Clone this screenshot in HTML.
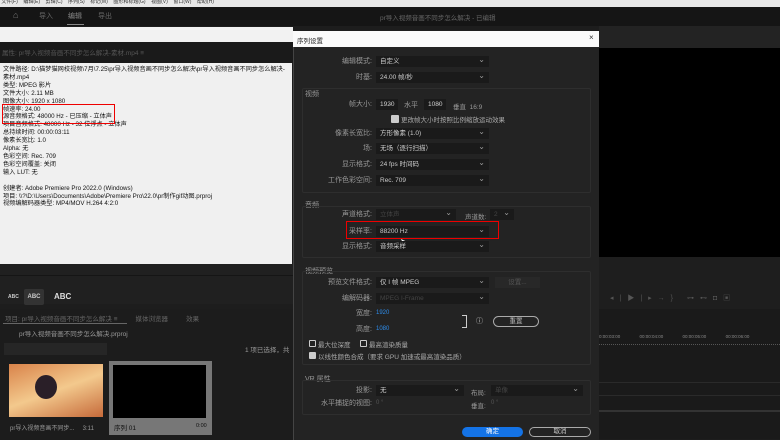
<!DOCTYPE html>
<html><head><meta charset="utf-8"><style>
*{margin:0;padding:0;box-sizing:border-box}
body{width:780px;height:440px;overflow:hidden;background:#1d1d1d;font-family:"Liberation Sans","Noto Sans CJK SC",sans-serif;position:relative;font-size:7px;color:#aaa}
.a{position:absolute;white-space:nowrap}
.dd{position:absolute;background:#1a1a1a;height:11px;color:#ccc;font-size:6.5px;line-height:11px;padding-left:4px}
.dd:after{content:"⌄";position:absolute;right:4px;top:-2px;color:#999;font-size:8px}
.lbl{position:absolute;color:#999;font-size:7px;text-align:right;width:90px;line-height:11px}
.box{position:absolute;border:1px solid #2e2e2e;border-radius:2px}
.sec{position:absolute;color:#999;font-size:7px}
.wt{color:#111;font-size:6.2px;line-height:7.9px}
</style></head><body>
<div class="a" style="left:0;top:0;width:780px;height:7px;background:#e8e8e8;color:#333;font-size:5px;line-height:5px">&nbsp;文件(F) &nbsp;&nbsp; 编辑(E) &nbsp;&nbsp; 剪辑(C) &nbsp;&nbsp; 序列(S) &nbsp;&nbsp; 标记(M) &nbsp;&nbsp; 图形和标题(G) &nbsp;&nbsp; 视图(V) &nbsp;&nbsp; 窗口(W) &nbsp;&nbsp; 帮助(H)</div>
<div class="a" style="left:0;top:7px;width:780px;height:19px;background:#151515"></div>
<div class="a" style="left:13px;top:11px;width:9px;height:9px;color:#777;font-size:9px;line-height:9px">⌂</div>
<div class="a" style="left:39px;top:11px;color:#666;font-size:7px">导入</div>
<div class="a" style="left:68px;top:11px;color:#888;font-size:7px">编辑</div>
<div class="a" style="left:67px;top:24px;width:17px;height:1px;background:#888"></div>
<div class="a" style="left:98px;top:11px;color:#666;font-size:7px">导出</div>
<div class="a" style="left:380px;top:12px;color:#666;font-size:6.5px">pr导入视频音画不同步怎么解决 - 已编辑</div>
<div class="a" style="left:0;top:27px;width:293px;height:15px;background:#f2f2f2"></div>
<div class="a" style="left:0;top:42px;width:293px;height:21px;background:#1a1a1a"></div>
<div class="a" style="left:2px;top:47px;color:#555;font-size:6.5px">属性: pr导入视频音画不同步怎么解决-素材.mp4 ≡</div>
<div class="a" style="left:0;top:63px;width:292px;height:201px;background:#f0f0f0"></div>
<div class="a wt" style="left:3px;top:66px">文件路径: D:\猫梦猫网校视频\7月\7.25\pr导入视频音画不同步怎么解决\pr导入视频音画不同步怎么解决-<br>素材.mp4<br>类型: MPEG 影片<br>文件大小: 2.11 MB<br>图像大小: 1920 x 1080<br>帧速率: 24.00<br>源音频格式: 48000 Hz - 已压缩 - 立体声<br>项目音频格式: 48000 Hz - 32 位浮点 - 立体声<br>总持续时间: 00:00:03:11<br>像素长宽比: 1.0<br>Alpha: 无<br>色彩空间: Rec. 709<br>色彩空间覆盖: 关闭<br>输入 LUT: 无<br><br>创建者: Adobe Premiere Pro 2022.0 (Windows)<br>项目: \\?\D:\Users\Documents\Adobe\Premiere Pro\22.0\pr制作gif动图.prproj<br>视频编解码器类型: MP4/MOV H.264 4:2:0</div>
<div class="a" style="left:2px;top:104px;width:113px;height:20px;border:1px solid #e00"></div>
<div class="a" style="left:0;top:264px;width:293px;height:40px;background:#202020"></div>
<div class="a" style="left:0;top:275px;width:293px;height:1px;background:#151515"></div>
<div class="a" style="left:8px;top:294px;color:#ccc;font-size:5px;font-weight:bold">ABC</div>
<div class="a" style="left:24px;top:289px;width:20px;height:16px;background:#333;border-radius:2px;color:#ccc;font-size:6px;text-align:center;line-height:16px;font-weight:bold">ABC</div>
<div class="a" style="left:54px;top:292px;color:#ddd;font-size:8px;font-weight:bold">ABC</div>
<div class="a" style="left:0;top:309px;width:293px;height:131px;background:#1c1c1c"></div>
<div class="a" style="left:5px;top:313px;color:#666;font-size:6.5px">项目: pr导入视频音画不同步怎么解决 ≡ &nbsp;&nbsp;&nbsp;&nbsp;&nbsp;&nbsp;&nbsp;&nbsp; 媒体浏览器 &nbsp;&nbsp;&nbsp;&nbsp;&nbsp;&nbsp;&nbsp;&nbsp; 效果</div>
<div class="a" style="left:3px;top:323px;width:124px;height:1px;background:#666"></div>
<div class="a" style="left:19px;top:328px;color:#999;font-size:6.5px">pr导入视频音画不同步怎么解决.prproj</div>
<div class="a" style="left:4px;top:343px;width:103px;height:12px;background:#262626"></div>
<div class="a" style="left:245px;top:344px;color:#999;font-size:6.5px">1 项已选择，共</div>
<div class="a" style="left:9px;top:364px;width:94px;height:53px;background:linear-gradient(160deg,#d9834a,#f3c98d 50%,#c66a3a)"></div>
<div class="a" style="left:35px;top:375px;width:22px;height:24px;border-radius:50%;background:#2a1f28"></div>
<div class="a" style="left:10px;top:423px;color:#999;font-size:6px">pr导入视频音画不同步...&nbsp;&nbsp;&nbsp;&nbsp; 3:11</div>
<div class="a" style="left:109px;top:361px;width:103px;height:74px;background:#777"></div>
<div class="a" style="left:113px;top:365px;width:93px;height:53px;background:#000"></div>
<div class="a" style="left:114px;top:422px;color:#111;font-size:6.5px">序列 01</div>
<div class="a" style="left:196px;top:423px;color:#111;font-size:5.5px">0:00</div>
<div class="a" style="left:599px;top:26px;width:181px;height:22px;background:#232323"></div>
<div class="a" style="left:599px;top:48px;width:181px;height:209px;background:#000"></div>
<div class="a" style="left:599px;top:257px;width:181px;height:52px;background:#1e1e1e"></div>
<div class="a" style="left:610px;top:293px;color:#555;font-size:7px;letter-spacing:6px">◂|▶|▸→} ⊶⊷◘▣</div>
<div class="a" style="left:599px;top:309px;width:181px;height:130px;background:#1a1a1a"></div>
<div class="a" style="left:599px;top:334px;color:#888;font-size:4.5px;word-spacing:18px">0:00:03:00 00:00:04:00 00:00:05:00 00:00:06:00</div>
<div class="a" style="left:599px;top:344px;width:181px;height:3px;border-top:1px dotted #555"></div>
<div class="a" style="left:599px;top:382px;width:181px;height:1px;background:#2a2a2a"></div>
<div class="a" style="left:599px;top:395px;width:181px;height:1px;background:#2a2a2a"></div>
<div class="a" style="left:599px;top:410px;width:181px;height:2px;background:#333"></div>
<div class="a" style="left:293px;top:31px;width:306px;height:409px;background:#232323;border-left:1px solid #444"></div>
<div class="a" style="left:293px;top:31px;width:306px;height:16px;background:#fafafa"></div>
<div class="a" style="left:297px;top:35px;color:#222;font-size:6.5px">序列设置</div>
<div class="a" style="left:589px;top:33px;color:#333;font-size:8px">×</div>

<div class="lbl" style="left:282px;top:56px">编辑模式:</div><div class="dd" style="left:376px;top:56px;width:113px">自定义</div>
<div class="lbl" style="left:282px;top:72px">时基:</div><div class="dd" style="left:376px;top:72px;width:113px">24.00 帧/秒</div>
<div class="sec" style="left:305px;top:89px">视频</div>
<div class="box" style="left:302px;top:88px;width:289px;height:105px"></div>
<div class="lbl" style="left:282px;top:99px">帧大小:</div>
<div class="dd" style="left:376px;top:99px;width:22px">1920</div>
<div class="a" style="left:404px;top:100px;color:#999;font-size:7px">水平</div>
<div class="dd" style="left:424px;top:99px;width:22px">1080</div>
<div class="a" style="left:453px;top:101px;color:#999;font-size:6.5px">垂直 &nbsp;16:9</div>
<div class="a" style="left:391px;top:115px;width:8px;height:8px;background:#ccc;border-radius:1px"></div>
<div class="a" style="left:401px;top:114px;color:#aaa;font-size:6.5px">更改帧大小时按照比例缩放运动效果</div>
<div class="lbl" style="left:282px;top:128px">像素长宽比:</div><div class="dd" style="left:376px;top:128px;width:113px">方形像素 (1.0)</div>
<div class="lbl" style="left:282px;top:143px">场:</div><div class="dd" style="left:376px;top:143px;width:113px">无场（逐行扫描）</div>
<div class="lbl" style="left:282px;top:159px">显示格式:</div><div class="dd" style="left:376px;top:159px;width:113px">24 fps 时间码</div>
<div class="lbl" style="left:282px;top:175px">工作色彩空间:</div><div class="dd" style="left:376px;top:175px;width:113px">Rec. 709</div>

<div class="sec" style="left:305px;top:200px">音频</div>
<div class="box" style="left:302px;top:206px;width:289px;height:52px"></div>
<div class="lbl" style="left:282px;top:209px">声道格式:</div><div class="dd" style="left:376px;top:209px;width:80px;color:#444">立体声</div>
<div class="a" style="left:465px;top:211px;color:#999;font-size:6.5px">声道数:</div><div class="dd" style="left:490px;top:209px;width:24px;color:#444">2</div>
<div class="lbl" style="left:282px;top:226px">采样率:</div><div class="dd" style="left:376px;top:226px;width:113px">88200 Hz</div>
<div class="a" style="left:346px;top:221px;width:153px;height:18px;border:1.5px solid #e00"></div>
<div class="a" style="left:400px;top:237px;color:#fff;font-size:8px">➤</div>
<div class="lbl" style="left:282px;top:241px">显示格式:</div><div class="dd" style="left:376px;top:241px;width:113px">音频采样</div>

<div class="sec" style="left:305px;top:266px">视频预览</div>
<div class="box" style="left:302px;top:271px;width:289px;height:94px"></div>
<div class="lbl" style="left:282px;top:277px">预览文件格式:</div><div class="dd" style="left:376px;top:277px;width:113px">仅 I 帧 MPEG</div>
<div class="a" style="left:495px;top:277px;width:45px;height:11px;background:#282828;color:#555;font-size:6.5px;text-align:center;line-height:11px">设置...</div>
<div class="lbl" style="left:282px;top:293px">编解码器:</div><div class="dd" style="left:376px;top:293px;width:113px;color:#444">MPEG I-Frame</div>
<div class="lbl" style="left:282px;top:308px">宽度:</div><div class="a" style="left:376px;top:310px;color:#2d8ceb;font-size:6px">1920</div>
<div class="lbl" style="left:282px;top:324px">高度:</div><div class="a" style="left:376px;top:326px;color:#2d8ceb;font-size:6px">1080</div>
<div class="a" style="left:462px;top:315px;width:5px;height:13px;border:1px solid #ccc;border-left:none"></div>
<div class="a" style="left:476px;top:316px;color:#ccc;font-size:7px">ⓘ</div>
<div class="a" style="left:493px;top:316px;width:46px;height:11px;border:1px solid #aaa;border-radius:6px;color:#bbb;font-size:6.5px;text-align:center;line-height:9px">重置</div>
<div class="a" style="left:309px;top:340px;width:7px;height:7px;border:1px solid #ccc;border-radius:1px"></div>
<div class="a" style="left:318px;top:339px;color:#aaa;font-size:6.5px">最大位深度</div>
<div class="a" style="left:360px;top:340px;width:7px;height:7px;border:1px solid #ccc;border-radius:1px"></div>
<div class="a" style="left:369px;top:339px;color:#aaa;font-size:6.5px">最高渲染质量</div>
<div class="a" style="left:309px;top:352px;width:7px;height:7px;background:#ccc;border-radius:1px"></div>
<div class="a" style="left:318px;top:351px;color:#aaa;font-size:6.5px">以线性颜色合成（要求 GPU 加速或最高渲染品质）</div>

<div class="sec" style="left:305px;top:374px">VR 属性</div>
<div class="box" style="left:302px;top:380px;width:289px;height:35px"></div>
<div class="lbl" style="left:282px;top:385px">投影:</div><div class="dd" style="left:376px;top:385px;width:88px">无</div>
<div class="a" style="left:471px;top:387px;color:#999;font-size:6.5px">布局:</div><div class="dd" style="left:491px;top:385px;width:92px;color:#444">单像</div>
<div class="lbl" style="left:282px;top:398px">水平捕捉的视图:</div><div class="a" style="left:376px;top:400px;color:#555;font-size:6px">0 °</div>
<div class="a" style="left:471px;top:400px;color:#999;font-size:6.5px">垂直:</div><div class="a" style="left:491px;top:400px;color:#555;font-size:6px">0 °</div>

<div class="a" style="left:462px;top:427px;width:61px;height:10px;background:#1473e6;border-radius:5px;color:#fff;font-size:6.5px;text-align:center;line-height:10px">确定</div>
<div class="a" style="left:529px;top:427px;width:62px;height:10px;border:1px solid #aaa;border-radius:5px;color:#ccc;font-size:6.5px;text-align:center;line-height:8px">取消</div>
</body></html>
